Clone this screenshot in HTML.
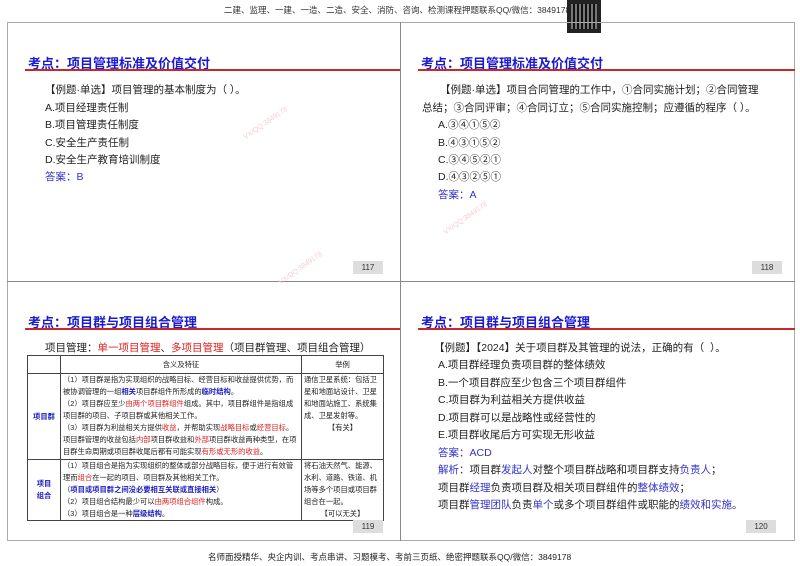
<!DOCTYPE html>
<html><head><meta charset="utf-8"><style>
*{margin:0;padding:0;box-sizing:border-box}
body{width:800px;height:566px;background:#fff;position:relative;overflow:hidden;font-family:"Liberation Sans","Noto Sans CJK SC",sans-serif;color:#222}
.a{position:absolute;white-space:nowrap}
.hdr{font-size:8.5px;color:#333}
.box{position:absolute;border:1px solid #aaa}
.t{position:absolute;font-size:13px;font-weight:bold;color:#1a1ad0}
.ul{position:absolute;height:2px;background:#c8282a}
.b{font-size:10.5px;color:#222}
.blue{color:#3333cc}
.pn{position:absolute;width:30px;height:13px;background:#ddd;font-size:8px;text-align:center;line-height:13px;color:#333}
table{position:absolute;border-collapse:collapse;font-size:7.3px;line-height:12px}
td{border:1px solid #444;vertical-align:top;padding:0 2px}
.r{color:#e02020}.bb{color:#2020c0;font-weight:bold}
.wm{position:absolute;color:#f0d0d0;font-size:7px;transform:rotate(-35deg)}
</style></head><body>
<div class="a hdr" style="left:224px;top:4px">二建、监理、一建、一造、二造、安全、消防、咨询、检测课程押题联系QQ/微信：3849178</div>
<div style="position:absolute;left:567px;top:0;width:34px;height:33px;background:#222"><div style="position:absolute;left:4px;top:4px;width:26px;height:25px;background:repeating-linear-gradient(90deg,#777 0 2px,#111 2px 4px)"></div></div>

<div class="box" style="left:7px;top:22px;width:788px;height:519px"></div>
<div style="position:absolute;left:400px;top:22px;width:1px;height:519px;background:#888"></div>
<div style="position:absolute;left:7px;top:281px;width:788px;height:1px;background:#888"></div>

<!-- TL -->
<div class="t" style="left:28px;top:53px">考点：项目管理标准及价值交付</div>
<div class="ul" style="left:25px;top:69px;width:375px"></div>
<div class="a b" style="left:45px;top:82px">【例题·单选】项目管理的基本制度为（ ）。</div>
<div class="a b" style="left:45px;top:100px">A.项目经理责任制</div>
<div class="a b" style="left:45px;top:117px">B.项目管理责任制度</div>
<div class="a b" style="left:45px;top:135px">C.安全生产责任制</div>
<div class="a b" style="left:45px;top:152px">D.安全生产教育培训制度</div>
<div class="a b blue" style="left:45px;top:169px">答案：B</div>
<div class="pn" style="left:353px;top:261px">117</div>

<!-- TR -->
<div class="t" style="left:421px;top:53px">考点：项目管理标准及价值交付</div>
<div class="ul" style="left:418px;top:69px;width:377px"></div>
<div class="a b" style="left:440px;top:82px">【例题·单选】项目合同管理的工作中，①合同实施计划；②合同管理</div>
<div class="a b" style="left:422px;top:100px">总结；③合同评审；④合同订立；⑤合同实施控制；应遵循的程序（ ）。</div>
<div class="a b" style="left:438px;top:117px">A.③④①⑤②</div>
<div class="a b" style="left:438px;top:135px">B.④③①⑤②</div>
<div class="a b" style="left:438px;top:152px">C.③④⑤②①</div>
<div class="a b" style="left:438px;top:169px">D.④③②⑤①</div>
<div class="a b blue" style="left:438px;top:187px">答案：A</div>
<div class="pn" style="left:752px;top:261px">118</div>

<!-- BL -->
<div class="t" style="left:28px;top:312px">考点：项目群与项目组合管理</div>
<div class="ul" style="left:25px;top:328px;width:375px"></div>
<div class="a" style="left:45px;top:340px;font-size:10.5px">项目管理：<span class="r">单一项目管理</span>、<span class="r">多项目管理</span>（项目群管理、项目组合管理）</div>
<table style="left:27px;top:355px;width:357px">
<tr style="height:18px"><td style="width:33px"></td><td style="width:241px;text-align:center;vertical-align:middle">含义及特征</td><td style="text-align:center;vertical-align:middle">举例</td></tr>
<tr style="height:86px"><td class="bb" style="vertical-align:middle;text-align:center">项目群</td><td>（1）项目群是指为实现组织的战略目标、经营目标和收益提供优势，而被协调管理的一组<span class="bb">相关</span>项目群组件所形成的<span class="bb">临时结构</span>。<br>（2）项目群应至少<span class="r">由两个项目群组件</span>组成。其中，项目群组件是指组成项目群的项目、子项目群或其他相关工作。<br>（3）项目群为利益相关方提供<span class="r">收益</span>，并帮助实现<span class="r">战略目标</span>或<span class="r">经营目标</span>。项目群管理的收益包括<span class="r">内部</span>项目群收益和<span class="r">外部</span>项目群收益两种类型，在项目群生命周期或项目群收尾后都有可能实现<span class="r">有形或无形的收益</span>。</td><td>通信卫星系统：包括卫星和地面站设计、卫星和地面站施工、系统集成、卫星发射等。<div style="text-align:center">【有关】</div></td></tr>
<tr style="height:60px"><td class="bb" style="vertical-align:middle;text-align:center">项目<br>组合</td><td>（1）项目组合是指为实现组织的整体或部分战略目标，便于进行有效管理而<span class="r">组合</span>在一起的项目、项目群及其他相关工作。<br>（<span class="bb">项目或项目群之间没必要相互关联或直接相关</span>）<br>（2）项目组合结构最少可以<span class="r">由两项组合组件</span>构成。<br>（3）项目组合是一种<span class="bb">层级结构</span>。</td><td>将石油天然气、能源、水利、道路、铁道、机场等多个项目或项目群组合在一起。<div style="text-align:center">【可以无关】</div></td></tr>
</table>
<div class="pn" style="left:353px;top:520px">119</div>

<!-- BR -->
<div class="t" style="left:421px;top:312px">考点：项目群与项目组合管理</div>
<div class="ul" style="left:418px;top:328px;width:377px"></div>
<div class="a b" style="left:434px;top:340px">【例题】【2024】关于项目群及其管理的说法，正确的有（ &nbsp;）。</div>
<div class="a b" style="left:438px;top:357px">A.项目群经理负责项目群的整体绩效</div>
<div class="a b" style="left:438px;top:375px">B.一个项目群应至少包含三个项目群组件</div>
<div class="a b" style="left:438px;top:392px">C.项目群为利益相关方提供收益</div>
<div class="a b" style="left:438px;top:410px">D.项目群可以是战略性或经营性的</div>
<div class="a b" style="left:438px;top:427px">E.项目群收尾后方可实现无形收益</div>
<div class="a b blue" style="left:438px;top:445px">答案：ACD</div>
<div class="a b" style="left:438px;top:462px"><span class="blue">解析：</span>项目群<span class="blue">发起人</span>对整个项目群战略和项目群支持<span class="blue">负责人</span>；</div>
<div class="a b" style="left:438px;top:480px">项目群<span class="blue">经理</span>负责项目群及相关项目群组件的<span class="blue">整体绩效</span>；</div>
<div class="a b" style="left:438px;top:497px">项目群<span class="blue">管理团队</span>负责<span class="blue">单个</span>或多个项目群组件或职能的<span class="blue">绩效和实施</span>。</div>
<div class="pn" style="left:746px;top:520px">120</div>

<div class="wm" style="left:240px;top:120px">VX/QQ:3849178</div>
<div class="wm" style="left:440px;top:215px">VX/QQ:3849178</div>
<div class="wm" style="left:275px;top:265px">VX/QQ:3849178</div>

<div class="a" style="left:208px;top:551px;font-size:8.5px;color:#222">名师面授精华、央企内训、考点串讲、习题模考、考前三页纸、绝密押题联系QQ/微信：3849178</div>
</body></html>
